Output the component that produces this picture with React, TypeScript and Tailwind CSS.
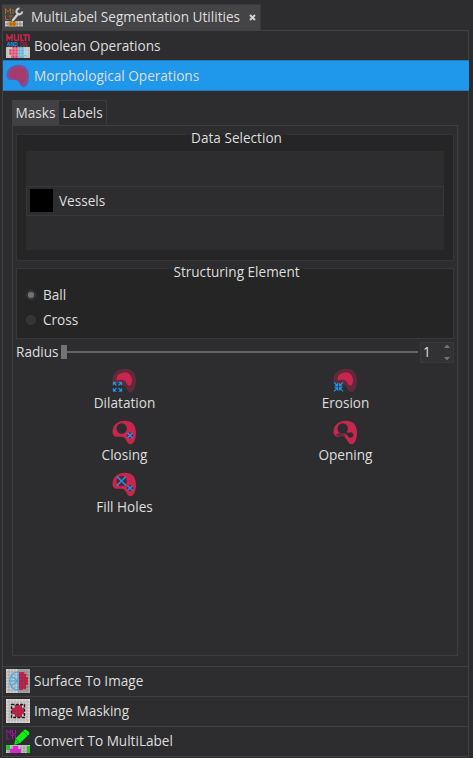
import React from "react";

const RED = "#c9264f";
const BLUE = "#1f97ea";
const BODY = "M.5 12C.5 5 6 .8 13 .8C20 .8 24 5 24 13C24 18 22 24.200 18.500 24.200C15 24.200 15 20 12 17.500C9 15 1.200 20 .5 12Z";

function PixelGrid({ x = 0, y = 0, w = 24, h = 24, step = 3, color = "#777" }: { x?: number; y?: number; w?: number; h?: number; step?: number; color?: string }) {
  const lines: React.ReactNode[] = [];
  for (let i = step; i < w; i += step) lines.push(<path key={"v" + i} d={`M${x + i} ${y}v${h}`} />);
  for (let i = step; i < h; i += step) lines.push(<path key={"h" + i} d={`M${x} ${y + i}h${w}`} />);
  return <g stroke={color} strokeWidth=".55" opacity=".75">{lines}</g>;
}

function WrenchIcon() {
  return (
    <svg className="-mt-px h-5 w-5 shrink-0" viewBox="0 0 20 20">
      <path d="M1.500 7V1.500L4 5l2.500-3.500V7M9 2v5M1.500 8.500v4h3M5 9h4M7 9v4" fill="none" stroke="#a86d20" strokeWidth="1" />
      <rect x="1" y="14" width="18" height="5.500" fill="#c8c8c8" />
      <path d="M5 14h7v5.500H5z" fill="#e08a16" />
      <PixelGrid x={1} y={14} w={18} h={6} step={3} color="#444" />
      <path d="M8 13.500L13 8" stroke="#444345" strokeWidth="5" />
      <path d="M9 13L14 7" stroke="#cdcdcd" strokeWidth="2.500" strokeLinecap="round" />
      <path d="M15.500 1.500A2.900 2.900 0 1 0 18.200 4.500" fill="none" stroke="#cdcdcd" strokeWidth="2.200" />
    </svg>
  );
}

function BooleanIcon() {
  return (
    <svg className="h-6 w-6 shrink-0" viewBox="0 0 24 24">
      <path d="M1 7V1l2.500 4L6 1v6M8.500 0v5q0 1.500 2 1.500t2-1.500V0M15 0v6.500h3M17 1h5M19.500 1v6M23 0v7" fill="none" stroke={RED} strokeWidth="1.5" />
      <text x="1" y="11.9" textLength="11" lengthAdjust="spacingAndGlyphs" fontSize="5.500" fontWeight="bold" fontFamily="Open Sans, sans-serif" fill={BLUE}>AND</text>
      <text x="13.5" y="11.9" textLength="8" lengthAdjust="spacingAndGlyphs" fontSize="5.500" fontWeight="bold" fontFamily="Open Sans, sans-serif" fill="#a02246">OR</text>
      <rect y="13" width="24" height="11" fill="#bdbdbd" />
      <path d="M3 15h3v-2h6v11H5v-3H3z" fill="#e0436a" />
      <path d="M12 13h6v3h3v6h-3v2h-6z" fill="#55b4d8" />
      <path d="M18 16h3v5h-3z" fill="#a8cbd8" />
      <PixelGrid y={12} h={12} color="#e5e5e5" />
    </svg>
  );
}

function MorphIcon() {
  return (
    <svg className="h-6 w-6 shrink-0" viewBox="0 0 25 25">
      <path d={BODY} fill="#625bb0" />
      <path d={BODY} fill="#8a4b8b" transform="translate(1.500 1.400) scale(.88)" />
      <path d={BODY} fill="#a43b6b" transform="translate(3.500 3) scale(.73)" />
    </svg>
  );
}

function SurfaceIcon() {
  return (
    <svg className="h-6 w-6 shrink-0" viewBox="0 0 24 24">
      <rect width="24" height="24" fill="#d2cfcf" />
      <path d="M12 0h12v24H12z" fill="#a6a6a6" />
      <PixelGrid color="#777" />
      <path d="M13 3h5v2h2v3h2v8h-2v4h-3v1h-4z" fill={RED} />
      <PixelGrid x={13} y={3} w={9} h={18} color="#77213b" />
      <path d="M12 3C1 3 1 21 12 21M12 2v20M5 7l7 5-7 5M3 12h9" fill="none" stroke="#38adf2" strokeWidth="1.2" />
    </svg>
  );
}

function MaskIcon() {
  return (
    <svg className="h-6 w-6 shrink-0" viewBox="0 0 24 24">
      <rect width="24" height="24" fill="#dad7d6" />
      <PixelGrid color="#888" />
      <path d="M9 6h7v3h2v6h-2v3H9v-3H6V9h3z" fill={RED} />
      <path d="M5.500 5.500h13v13h-13z" fill="none" stroke="#1b1b1b" strokeWidth="1.400" strokeDasharray="3 1.300" />
      <PixelGrid x={6} y={6} w={12} h={12} color="#77213b" />
    </svg>
  );
}

function ConvertIcon() {
  return (
    <svg className="h-6 w-6 shrink-0" viewBox="0 0 24 24">
      <path d="M.8 6V.8l2 3 2-3V6M6.500.8V5h3V.8M.8 6v4h3M5 6.500h3M6.500 6.500V10M9.500 6v4.500" fill="none" stroke="#a014a5" strokeWidth="1" />
      <rect y="16" width="24" height="8" fill="#c8c5c3" />
      <path d="M0 16h4v5H0zM21 17h3v7h-3z" fill="#16d91a" />
      <path d="M4 20h3v-3h5v3h3v4H4z" fill="#f810ec" />
      <PixelGrid y={16} h={8} color="#777" />
      <path d="M8 16L10 9L18 1Q19 0 20.500 1L23 3Q24 4 23 5.500L14 14Z" fill="#12ed16" />
      <path d="M10 10l3 4M17 2l5 5M10 14l1-1" stroke="#187b20" strokeWidth=".8" />
    </svg>
  );
}

type Kind = "dilate" | "erode" | "close" | "open" | "fill";

function OperationIcon({ kind }: { kind: Kind }) {
  const layered = kind === "dilate" || kind === "erode";
  return (
    <svg className="h-[25px] w-[25px]" viewBox="0 0 25 25">
      <path d={BODY} fill={layered ? "#602a3a" : RED} />
      {layered && <path d="M4.500 11C4.500 6 10 4 14 4.500C18 5 20 9 20 12C20 15 19 18 17 17.500C14 17 15 13 11 12C8 11 4.500 14 4.500 11Z" fill={RED} />}
      {kind === "dilate" && (
        <g fill={BLUE} stroke={BLUE} strokeWidth="1.1">
          <path d="M1 14h3.500L1 17.500zM10 14v3.500L6.500 14zM1 23.500V20l3.500 3.500zM10 23.500H6.500L10 20z" strokeWidth=".3" />
          <path d="M2 15l2.500 2.600M9 15l-2.500 2.600M2 22.500L4.500 20M9 22.500L6.500 20" />
        </g>
      )}
      {kind === "erode" && (
        <g fill={BLUE} stroke={BLUE} strokeWidth="1.1">
          <path d="M5 18.300H1.500L5 14.800zM6 18.300h3.500L6 14.800zM5 19.300H1.500L5 22.800zM6 19.300h3.500L6 22.800z" strokeWidth=".3" />
          <path d="M1 14.300l3 3M10 14.300l-3 3M1 23.300l3-3M10 23.300l-3-3" />
        </g>
      )}
      {kind === "close" && (
        <g><circle cx="9.700" cy="8.500" r="5.200" fill="#2d2d2f" /><circle cx="18" cy="15.500" r="3" fill="#54283c" /><path d="M15.500 13l5 5m0-5l-5 5" stroke={BLUE} strokeWidth="1.5" /></g>
      )}
      {kind === "open" && (
        <g fill="#2d2d2f"><circle cx="9.700" cy="8.500" r="5.200" /><circle cx="17.500" cy="15" r="2.800" /><path d="M12 12l5 1v4l-6-4z" /><path d="M2 15l4-2 6 2v3l-4-1z" opacity=".65" /></g>
      )}
      {kind === "fill" && (
        <g><circle cx="9.700" cy="9" r="5.300" fill="#54283c" /><circle cx="18" cy="16" r="3" fill="#54283c" /><path d="M5 4.500l9 9m0-9l-9 9M15.500 13.500l5 5m0-5l-5 5" stroke={BLUE} strokeWidth="1.35" /></g>
      )}
    </svg>
  );
}

function Operation({ kind, label }: { kind: Kind; label: string }) {
  return (
    <button className="flex h-[52px] w-[221px] flex-col items-center">
      <OperationIcon kind={kind} />
      <span className="leading-5">{label}</span>
    </button>
  );
}

function GroupTitle({ children }: { children: React.ReactNode }) {
  return (
    <div className="-mt-[7px] flex h-5 items-center justify-center pl-[3px]">
      <span className="bg-[linear-gradient(#2d2d2f_0_7px,#252525_7px)] px-[5px] leading-5">{children}</span>
    </div>
  );
}

function PageRow({ icon, label }: { icon: React.ReactNode; label: string }) {
  return (
    <button className="flex h-[30px] w-full items-center gap-1 border-b border-[#414145] pb-[2px] pl-[3px] text-left">
      {icon}<span>{label}</span>
    </button>
  );
}

function Radio({ label, checked }: { label: string; checked?: boolean }) {
  return (
    <label className="flex h-[25px] items-center gap-[7px] pl-[9px]">
      <span className="flex h-[10px] w-[10px] items-center justify-center rounded-full border border-[#3b3b3f] bg-[#343438]">
        {checked && <span className="h-[6px] w-[6px] rounded-full bg-[#737373]" />}
      </span>
      {label}
    </label>
  );
}

export default function App() {
  return (
    <div className="flex h-[758px] w-[473px] flex-col overflow-hidden bg-[#2d2d2f] pl-[2px] pt-1 font-['Open_Sans','Noto_Sans',sans-serif] text-[13.6px] leading-5 text-[#dedede]">
      <header className="flex h-[26px] w-[259px] shrink-0 items-center border-r border-t border-[#39393b] bg-[#444345] pl-[2px]">
        <WrenchIcon />
        <span className="-mt-px ml-[7px] w-[212px] whitespace-nowrap">MultiLabel Segmentation Utilities</span>
        <svg className="ml-[6px] h-[7px] w-[7px]" viewBox="0 0 7 7"><path d="M1 1l5 5m0-5L1 6" stroke="#d2d2d2" strokeWidth="2" /></svg>
      </header>
      <main className="flex h-[727px] w-[467px] flex-col border border-[#414143]">
        <button className="flex h-[29px] shrink-0 items-center gap-1 pl-[3px] text-left"><BooleanIcon />Boolean Operations</button>
        <button className="flex h-[31px] w-[466px] shrink-0 items-center gap-1 border-y border-[#2879b5] bg-[#1f97ea] pl-[3px] text-left"><MorphIcon />Morphological Operations</button>
        <section className="h-[575px] shrink-0 pl-[9px] pt-[9px]">
          <div className="flex h-[25px]">
            <button className="w-[47px] bg-[#414143] text-center">Masks</button>
            <button className="w-[48px] border-r border-t border-[#3a3a3c] text-center">Labels</button>
          </div>
          <div className="h-[531px] w-[446px] border border-[#3e3e40] px-[3px] pt-2">
            <div className="h-[127px] border border-[#353537] bg-[#252525] px-[9px]">
              <GroupTitle>Data Selection</GroupTitle>
              <div className="mt-[3px] h-[99px] w-[418px] bg-[#2d2d2f] pt-[35px]">
                <div className="flex h-[30px] items-center border border-[#38383b] pb-px pl-[3px]">
                  <span className="h-[23px] w-[23px] bg-black" />
                  <span className="ml-[6px]">Vessels</span>
                </div>
              </div>
            </div>
            <div className="mt-[7px] h-[71px] border border-[#38383a] bg-[#252525]">
              <GroupTitle>Structuring Element</GroupTitle>
              <div><Radio label="Ball" checked /><Radio label="Cross" /></div>
            </div>
            <div className="mt-[2px] flex h-[22px] items-center">
              <span className="w-[45px]">Radius</span>
              <span className="h-[14px] w-[6px] bg-[#737373]" />
              <span className="h-[2px] w-[351px] bg-[#666668]" />
              <div className="ml-[2px] flex h-[21px] w-[34px] items-center justify-between border border-[#38383b] bg-[#323234] pl-[2px] pr-[3px]">
                <span>1</span>
                <svg className="h-[17px] w-[6px]" viewBox="0 0 6 17"><path d="M0 4h6L3 .5zM0 13h6l-3 3.500z" fill="#737373" /></svg>
              </div>
            </div>
            <div className="-ml-[2px] mt-[5px] flex w-[442px] flex-wrap">
              <Operation kind="dilate" label="Dilatation" />
              <Operation kind="erode" label="Erosion" />
              <Operation kind="close" label="Closing" />
              <Operation kind="open" label="Opening" />
              <Operation kind="fill" label="Fill Holes" />
            </div>
          </div>
        </section>
        <div className="border-t border-[#414145]">
          <PageRow icon={<SurfaceIcon />} label="Surface To Image" />
          <PageRow icon={<MaskIcon />} label="Image Masking" />
          <PageRow icon={<ConvertIcon />} label="Convert To MultiLabel" />
        </div>
      </main>
    </div>
  );
}
